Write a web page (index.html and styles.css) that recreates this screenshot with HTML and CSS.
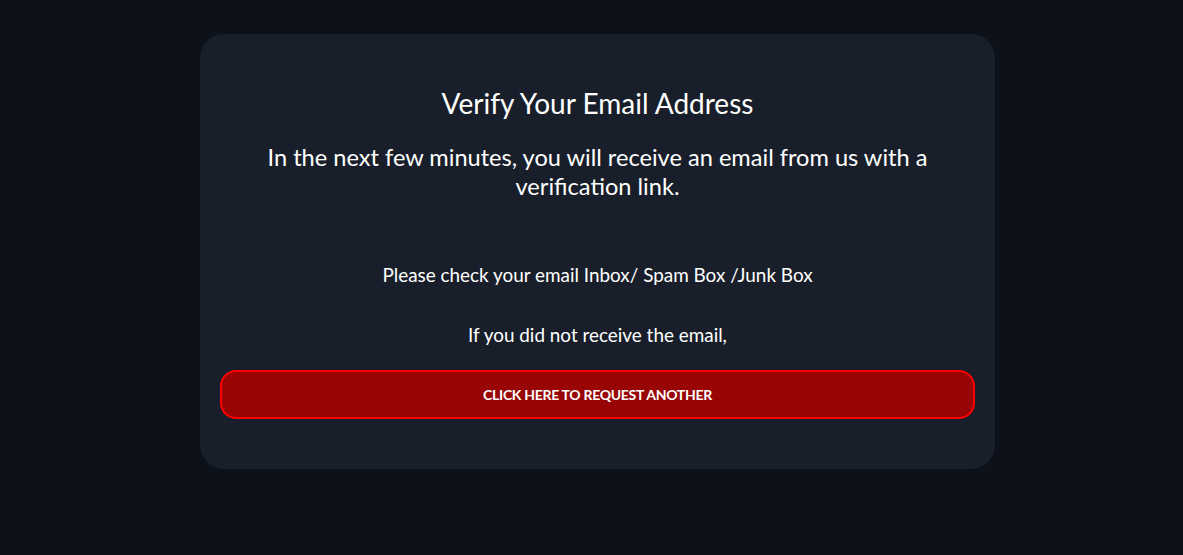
FILE: index.html
```html
<!DOCTYPE html>
<html lang="en">
<head>
    <meta charset="UTF-8">
    <meta name="viewport" content="width=device-width, initial-scale=1">
    <title>Verify Your Email Address</title>
    <link rel="stylesheet" href="styles.css">
</head>
<body>
    <div class="card">
        <h1>Verify Your Email Address</h1>
        <p class="lead">In the next few minutes, you will receive an email from us with a verification link.</p>
        <p class="note check">Please check your email Inbox/ Spam Box /Junk Box</p>
        <p class="note">If you did not receive the email,</p>
        <button class="resend">CLICK HERE TO REQUEST ANOTHER</button>
    </div>
</body>
</html>
```

FILE: styles.css
```css
* {
    box-sizing: border-box;
    font-family: "Lato", "Open Sans", sans-serif;
}

body {
    margin: 0;
    padding: 34px 0 34px 12px;
    background: #0d111a;
    color: #ffffff;
}

.card {
    width: 795px;
    margin: 0 auto;
    padding: 51px 20px 50px;
    background: #191f2a;
    border-radius: 24px;
    text-align: center;
}

h1 {
    font-size: 28px;
    font-weight: 400;
    line-height: 36px;
    margin: 0;
}

.lead {
    font-size: 23.6px;
    line-height: 29px;
    max-width: 700px;
    margin: 22px auto 0;
}

.note {
    font-size: 18.9px;
    line-height: 24px;
    margin: 0;
}

.check {
    margin-top: 62px;
    margin-bottom: 36px;
}

.resend {
    display: block;
    width: 100%;
    height: 49px;
    margin-top: 23px;
    background: #990505;
    color: #ffffff;
    border: 2px solid #ff0000;
    border-radius: 16px;
    font-size: 14px;
    font-weight: 700;
    letter-spacing: -0.3px;
}
```
